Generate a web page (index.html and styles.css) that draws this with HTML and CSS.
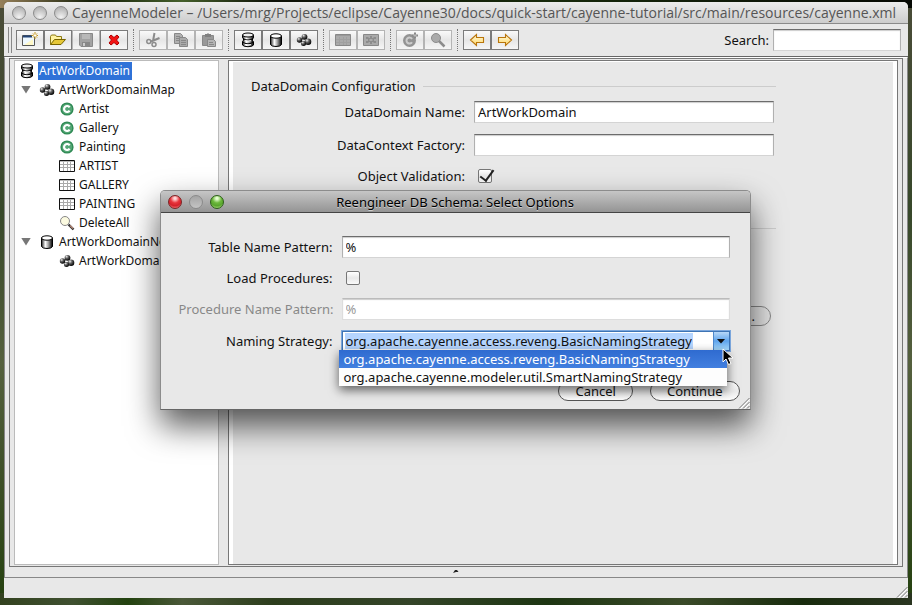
FILE: index.html
```html
<!DOCTYPE html>
<html lang="en">
<head>
<meta charset="utf-8">
<title>CayenneModeler</title>
<link rel="stylesheet" href="styles.css">
</head>
<body>
<svg class="defs" aria-hidden="true">
  <defs>
    <linearGradient id="metal"><stop offset="0" stop-color="#222"/><stop offset=".35" stop-color="#fff"/><stop offset=".6" stop-color="#aaa"/><stop offset="1" stop-color="#000"/></linearGradient>
    <radialGradient id="ball" cx=".35" cy=".3" r=".7"><stop offset="0" stop-color="#eee"/><stop offset=".4" stop-color="#666"/><stop offset="1" stop-color="#000"/></radialGradient>
    <linearGradient id="gold" x2="0" y2="1"><stop offset="0" stop-color="#fffbe0"/><stop offset="1" stop-color="#ffd868"/></linearGradient>
  </defs>
  <symbol id="i-domain" viewBox="0 0 16 16">
    <path d="M2.500 3v2.500q0 .8 1 1v2q-1 .3-1 1v3.500q1 1.700 5.500 1.700t5.500-1.700v-3q0-.8-1-1.200v-2q1-.4 1-1V3z" fill="url(#metal)" stroke="#000"/>
    <ellipse cx="8" cy="3" rx="5.500" ry="2" fill="#eee" stroke="#000"/>
    <path d="M3 6.500q1.500 1.500 5 1.500t5-1.500M3 10q1.500 1.800 5 1.800t5-1.800" fill="none" stroke="#000"/>
    <path d="M5 8.700q3 .8 6 0M5 12.600q3 .8 6 0" fill="none" stroke="#fff"/>
  </symbol>
  <symbol id="i-node" viewBox="0 0 16 16">
    <path d="M2.500 4v8.500q1 2 5.500 2t5.500-2V4z" fill="url(#metal)" stroke="#000"/>
    <ellipse cx="8" cy="4" rx="5.500" ry="2.200" fill="#fff" stroke="#000"/>
  </symbol>
  <symbol id="i-map" viewBox="0 0 16 16">
    <path d="M4 9l5-4M9 5l3 6M4 9l8 2" stroke="#555" fill="none"/>
    <circle cx="3.500" cy="8" r="2.700" fill="url(#ball)"/><circle cx="8.500" cy="4.800" r="2.900" fill="url(#ball)"/>
    <circle cx="12" cy="9.800" r="3.300" fill="url(#ball)"/><circle cx="7.500" cy="11.500" r="2.500" fill="url(#ball)"/>
  </symbol>
  <symbol id="i-class" viewBox="0 0 16 16">
    <circle cx="8" cy="8" r="6.600" fill="#2f8a54"/>
    <circle cx="8" cy="8" r="5.200" fill="#55a676"/>
    <path d="M10.600 6.400A3 3 0 1 0 10.600 9.600" fill="none" stroke="#fff" stroke-width="2.200"/>
  </symbol>
  <symbol id="i-table" viewBox="0 0 16 14">
    <path d="M.5 1.500h15v11H.5z" fill="#fff" stroke="#111"/>
    <path d="M1 2.500h14" stroke="#bbb"/>
    <path d="M1 5.500h14M1 8.500h14M4.500 3v9M8.500 3v9M11.500 3v9" stroke="#aaa"/>
  </symbol>
  <symbol id="i-query" viewBox="0 0 16 16">
    <path d="M9.500 9.500l5 5" stroke="#333" stroke-width="2.400"/><path d="M11 10.500l3 3" stroke="#b98876" stroke-width="1.200"/>
    <circle cx="6" cy="6" r="4.500" fill="#fbfae0" stroke="#888"/>
  </symbol>
  <symbol id="i-left" viewBox="0 0 16 16">
    <path d="M1.500 8L7.500 2.500V5.500H14.500V10.500H7.500V13.500Z" fill="url(#gold)" stroke="#b9760c" stroke-width="1.100"/>
  </symbol>
  <symbol id="i-grip" viewBox="0 0 12 12">
    <path d="M1 11.500L11.500 1M5 11.500L11.500 5M9 11.500L11.500 9" stroke="#777"/><path d="M2.500 11.500L11.500 2.500M6.500 11.500L11.500 6.500" stroke="#fff"/>
  </symbol>
</svg>

<main class="window">
  <header class="titlebar">
    <span class="lights"><i></i><i></i><i></i></span>
    <h1>CayenneModeler – /Users/mrg/Projects/eclipse/Cayenne30/docs/quick-start/cayenne-tutorial/src/main/resources/cayenne.xml</h1>
  </header>

  <div class="toolbar">
    <span class="handle"></span>
    <div class="group">
      <button type="button" aria-label="New project"><svg viewBox="0 0 16 16"><path d="M.5 3.500h12v10H.5z" fill="#eef8ff" stroke="#555"/><path d="M1 4.500h9" stroke="#247" stroke-width="2"/><path d="M2 13L11 7v6z" fill="#fff8c8"/><path d="M13 0v7M9.500 3.500h6.500M11 1.500l4 4M15 1.500l-4 4" stroke="#c89818"/><path d="M13 2v3M11.500 3.500h3" stroke="#fff"/></svg></button>
      <button type="button" aria-label="Open project"><svg viewBox="0 0 16 16"><path d="M.5 12.500v-8l1-1.500h4l1 1.500h5v3" fill="#fff3a0" stroke="#8d7b12"/><path d="M.5 12.500L4.500 7.500h11L11 12.500z" fill="#e6c838" stroke="#776400"/></svg></button>
      <button type="button" aria-label="Save" disabled><svg viewBox="0 0 16 16"><path d="M1.500 1.500h13v13H3l-1.500-1.500z" fill="#a2a2a2" stroke="#888"/><path d="M4 2h8v5H4z" fill="#b8b8b8"/><path d="M4 10h8v4H4z" fill="#888"/><path d="M5 11h2v3H5z" fill="#ccc"/></svg></button>
      <button type="button" aria-label="Remove"><svg viewBox="0 0 16 16"><path d="M3 5l2-2 3 2.500L11 3l2 2-2.500 3 2.500 3-2 2-3-2.500L5 13l-2-2 2.500-3z" fill="#f31313" stroke="#b00000"/></svg></button>
    </div>
    <span class="sep"></span>
    <div class="group">
      <button type="button" aria-label="Cut" disabled><svg viewBox="0 0 16 16"><path d="M9.500 1L8 9M14.500 6L6 9.500" stroke="#8c8c8c" stroke-width="2"/><circle cx="3.800" cy="9.500" r="2" fill="none" stroke="#8c8c8c" stroke-width="1.500"/><circle cx="9" cy="12.500" r="2" fill="none" stroke="#8c8c8c" stroke-width="1.500"/></svg></button>
      <button type="button" aria-label="Copy" disabled><svg viewBox="0 0 16 16"><path d="M1.500 1.500h6l2 2v8h-8z" fill="#b0b0b0" stroke="#888"/><path d="M6.500 5.500h6l2 2v7h-8z" fill="#aaa" stroke="#888"/><path d="M3 4.500h4M3 6.500h3M3 8.500h3M8 8.500h5M8 10.500h5M8 12.500h5" stroke="#888"/></svg></button>
      <button type="button" aria-label="Paste" disabled><svg viewBox="0 0 16 16"><path d="M1.500 3.500h11v10h-11z" fill="#999" stroke="#888"/><path d="M4 2h2l1-1 1 1h2v3H4z" fill="#808080"/><path d="M6.500 7.500h6l2 2v5h-8z" fill="#b4b4b4" stroke="#888"/><path d="M8 10.500h4M8 12.500h5" stroke="#888"/></svg></button>
    </div>
    <span class="sep"></span>
    <div class="group">
      <button type="button" aria-label="New domain"><svg><use href="#i-domain"/></svg></button>
      <button type="button" aria-label="New node"><svg><use href="#i-node"/></svg></button>
      <button type="button" aria-label="New map"><svg><use href="#i-map"/></svg></button>
    </div>
    <span class="sep"></span>
    <div class="group">
      <button type="button" aria-label="New table" disabled><svg viewBox="0 0 16 16"><path d="M.5 2.500h15v11H.5z" fill="#aaa" stroke="#888"/><path d="M1 3.500h14" stroke="#999"/><path d="M1 7.500h14M1 10.500h14M4.500 5v8M8.500 5v8M11.500 5v8" stroke="#a0a0a0"/></svg></button>
      <button type="button" aria-label="New procedure" disabled><svg viewBox="0 0 16 16"><path d="M.5 2.500h15v11H.5z" fill="#aaa" stroke="#888"/><path d="M3 5h2l1 1h1V4h2v2h1l1-1h2v2h-2v2h2v2h-2l-1-1H9v2H7v-2H6l-1 1H3V9h2V7H3z" fill="#8c8c8c"/><path d="M6.500 7.500h3v1h-3z" fill="#ccc"/></svg></button>
    </div>
    <span class="sep"></span>
    <div class="group">
      <button type="button" aria-label="New class" disabled><svg viewBox="0 0 16 16"><circle cx="7.500" cy="8.500" r="6.500" fill="#939393"/><path d="M10 7A3 3 0 1 0 10 10.200" fill="none" stroke="#ccc" stroke-width="2"/><path d="M13 .5v6M10 3.500h6" stroke="#888" stroke-width="2"/><path d="M13 2v3M11.500 3.500h3" stroke="#bbb"/></svg></button>
      <button type="button" aria-label="New query" disabled><svg viewBox="0 0 16 16"><path d="M9 9l5.500 5.500" stroke="#8c8c8c" stroke-width="2.500"/><circle cx="6" cy="6" r="4.500" fill="#aaa" stroke="#8c8c8c"/></svg></button>
    </div>
    <span class="sep"></span>
    <div class="group">
      <button type="button" aria-label="Back"><svg><use href="#i-left"/></svg></button>
      <button type="button" aria-label="Forward"><svg class="flip"><use href="#i-left"/></svg></button>
    </div>
    <label class="search">Search: <input type="text"></label>
  </div>

  <div class="workspace">
    <div class="split">
      <nav class="tree" aria-label="Project">
        <ul>
          <li><a class="node selected" href="#domain"><svg><use href="#i-domain"/></svg><span>ArtWorkDomain</span></a>
            <ul>
              <li><div class="branch"><button type="button" class="toggle" aria-label="Collapse"></button><a class="node" href="#map"><svg><use href="#i-map"/></svg><span>ArtWorkDomainMap</span></a></div>
                <ul class="leaves">
                  <li><a class="node" href="#n1"><svg><use href="#i-class"/></svg><span>Artist</span></a></li>
                  <li><a class="node" href="#n2"><svg><use href="#i-class"/></svg><span>Gallery</span></a></li>
                  <li><a class="node" href="#n3"><svg><use href="#i-class"/></svg><span>Painting</span></a></li>
                  <li><a class="node" href="#n4"><svg><use href="#i-table"/></svg><span>ARTIST</span></a></li>
                  <li><a class="node" href="#n5"><svg><use href="#i-table"/></svg><span>GALLERY</span></a></li>
                  <li><a class="node" href="#n6"><svg><use href="#i-table"/></svg><span>PAINTING</span></a></li>
                  <li><a class="node" href="#n7"><svg><use href="#i-query"/></svg><span>DeleteAll</span></a></li>
                </ul>
              </li>
              <li><div class="branch"><button type="button" class="toggle" aria-label="Collapse"></button><a class="node" href="#node"><svg><use href="#i-node"/></svg><span>ArtWorkDomainNode</span></a></div>
                <ul class="leaves">
                  <li><a class="node" href="#n8"><svg><use href="#i-map"/></svg><span>ArtWorkDomainMap</span></a></li>
                </ul>
              </li>
            </ul>
          </li>
        </ul>
      </nav>
      <section class="editor">
        <form class="config">
          <h2>DataDomain Configuration</h2>
          <div class="fields">
            <label for="dname">DataDomain Name:</label><input id="dname" type="text" value="ArtWorkDomain">
            <label for="factory">DataContext Factory:</label><input id="factory" type="text">
            <label for="valid">Object Validation:</label><input id="valid" type="checkbox" checked>
          </div>
          <hr>
          <button type="button" class="pill remote">...</button>
        </form>
      </section>
    </div>
    <div class="console"><svg viewBox="0 0 6 4"><path d="M0 3L2 0h2l1.500 2L3 2z" fill="#222"/></svg></div>
  </div>
  <footer class="status"><svg class="grip"><use href="#i-grip"/></svg></footer>
</main>

<div class="dialog" role="dialog" aria-labelledby="dtitle">
  <header class="dialog-title">
    <span class="lights"><i class="red"></i><i class="gray"></i><i class="green"></i></span>
    <h2 id="dtitle">Reengineer DB Schema: Select Options</h2>
  </header>
  <form class="dialog-body">
    <div class="options">
      <label for="tpat">Table Name Pattern:</label><input id="tpat" type="text" value="%">
      <label for="load">Load Procedures:</label><input id="load" type="checkbox">
      <label for="ppat" class="off">Procedure Name Pattern:</label><input id="ppat" type="text" value="%" disabled>
      <label for="strategy">Naming Strategy:</label>
      <div class="combo">
        <input id="strategy" type="text" value="org.apache.cayenne.access.reveng.BasicNamingStrategy">
        <button type="button" class="drop" aria-label="Show strategies"></button>
        <ul class="popup" role="listbox">
          <li role="option" aria-selected="true">org.apache.cayenne.access.reveng.BasicNamingStrategy</li>
          <li role="option" aria-selected="false">org.apache.cayenne.modeler.util.SmartNamingStrategy</li>
        </ul>
        <svg class="cursor" viewBox="0 0 12 18"><path d="M1 1v13l3-3 2.500 5.500 2.500-1L6.500 10H11z" fill="#000" stroke="#fff"/></svg>
      </div>
    </div>
    <div class="actions">
      <button type="button" class="pill">Cancel</button>
      <button type="button" class="pill">Continue</button>
    </div>
  </form>
  <svg class="grip"><use href="#i-grip"/></svg>
</div>
</body>
</html>
```
FILE: styles.css
```css
* { box-sizing: border-box; }

body {
  margin: 0;
  min-height: 100vh;
  padding: 2px 4px 7px 4px;
  display: flex;
  flex-direction: column;
  overflow: hidden;
  font: 13px/18px "Noto Sans", sans-serif;
  color: #111;
  background:
    linear-gradient(90deg, #33421f, #3f5030 8%, #23420f 14%, #4a5838 20%, #2c3d1c 30%, #344428 45%, #1d3512 60%, #3a4a28 75%, #182b0d 88%, #2a3520) bottom / 100% 12px no-repeat,
    linear-gradient(90deg, #96805a, #16200a 10%, #45602c 20%, #0c0f06 30%, #182a0c 60%, #060904) top / 100% 8px no-repeat,
    linear-gradient(#4a4c38, #37482a 35%, #55603e 60%, #24400f);
}

.defs { position: absolute; width: 0; height: 0; }
ul { list-style: none; margin: 0; padding: 0; }
h1, h2 { margin: 0; font-weight: 400; font-size: 13px; }
input, button { font: inherit; color: inherit; margin: 0; }
svg { display: block; }

.window {
  flex: 1;
  display: flex;
  flex-direction: column;
  border-radius: 5px 5px 0 0;
  background: #e8e8e8;
}

.titlebar {
  display: flex;
  align-items: center;
  height: 22px;
  padding: 0 8px;
  border-bottom: 1px solid #8a8a8a;
  border-radius: 5px 5px 0 0;
  background: linear-gradient(#ececec, #cdcdcd);
}
.titlebar h1 {
  flex: 1;
  font-family: "Open Sans", "Noto Sans", sans-serif;
  font-size: 14px;
  text-align: center;
  white-space: nowrap;
  color: #555;
}

.lights { display: flex; gap: 7px; }
.lights i {
  width: 14px;
  height: 14px;
  border: 1px solid #8b8b8b;
  border-radius: 50%;
  background: radial-gradient(circle at 50% 85%, #f2f2f2, #c4c4c4 60%, #a8a8a8);
}
.lights .red { border-color: #7b2424; background: radial-gradient(circle at 50% 20%, #ffd9d9 8%, #e8343c 40%, #d3202a 65%, #ff9a9a); }
.lights .gray { border-color: #8a8a8a; background: linear-gradient(#a4a4a4, #c4c4c4); }
.lights .green { border-color: #2c5e18; background: radial-gradient(circle at 50% 20%, #e6ffd2 8%, #6cb83c 40%, #58a52c 65%, #c8f49a); }

.toolbar {
  display: flex;
  align-items: center;
  height: 33px;
  padding: 0 7px 0 4px;
  border-bottom: 1px solid #666;
}
.handle { width: 4px; height: 26px; margin-right: 4px; border: solid #888; border-width: 0 1px; }
.group { display: flex; }
.group button {
  display: grid;
  place-items: center;
  width: 28px;
  height: 20px;
  padding: 0;
  border: 1px solid #7b7b7b;
  background: linear-gradient(#fafafa, #e6e6e6 50%, #f6f6f6);
}
.group button:disabled { border-color: #b4b4b4; }
.group svg { width: 16px; height: 16px; }
.flip { transform: scaleX(-1); }
.sep { width: 1px; height: 22px; margin: 0 5px; border-left: 1px dotted #777; }
.search { display: flex; align-items: center; gap: 4px; margin-left: auto; }
.search input { width: 128px; }

input[type="text"] {
  min-width: 0;
  height: 22px;
  padding: 0 3px;
  border: 1px solid #b0b0b0;
  border-top-color: #6c6c6c;
  border-bottom-color: #d4d4d4;
  border-radius: 0;
  outline: none;
  background: #fff;
  box-shadow: inset 0 1px 1px #ccc;
}
input[type="text"]:disabled { color: #999; border-color: #ddd; border-top-color: #bbb; }

input[type="checkbox"] {
  appearance: none;
  width: 14px;
  height: 14px;
  margin-left: 4px;
  border: 1px solid #777;
  border-radius: 2px;
  background: linear-gradient(#fff, #e8e8e8 50%, #fafafa);
}
input[type="checkbox"]:checked::after {
  content: "";
  display: block;
  width: 6px;
  height: 12px;
  margin: -3px 0 0 4px;
  border: solid #222;
  border-width: 0 2px 2px 0;
  transform: rotate(36deg);
}

.workspace {
  flex: 1;
  display: flex;
  flex-direction: column;
  border: 1px solid #888;
  border-top-color: #fff;
}
.split {
  flex: 1;
  display: flex;
  gap: 9px;
  margin: 0 4px;
  padding: 1px 4px;
  border: 1px solid #777;
}
.tree {
  flex: 0 0 205px;
  overflow: hidden;
  padding: 0 4px;
  border: 1px solid #bbb;
  background: #fff;
  font-size: 12px;
}
.node {
  display: flex;
  align-items: center;
  gap: 3px;
  height: 19px;
  color: inherit;
  text-decoration: none;
  white-space: nowrap;
}
.node svg { flex: none; width: 16px; height: 16px; }
.node span { padding: 0 2px 0 1px; }
.node.selected span { color: #fff; background: #2f72d8; }
.branch { display: flex; align-items: center; }
.toggle {
  width: 10px;
  height: 8px;
  margin: 0 8px 0 2px;
  padding: 0;
  border: 0;
  background: #777;
  clip-path: polygon(0 0, 100% 0, 50% 100%);
}
.leaves { padding-left: 40px; }

.editor {
  flex: 1;
  min-width: 0;
  border: 1px solid #777;
  box-shadow: inset 4px 1px #fff, inset -4px 0 #fff;
  padding: 15px 22px;
}
.config { max-width: 525px; display: flex; flex-direction: column; }
.config h2 { display: flex; align-items: center; gap: 7px; height: 20px; }
.config h2::after { content: ""; flex: 1; border-top: 1px solid #ccc; }
.fields {
  display: grid;
  grid-template-columns: 214px 1fr;
  gap: 11px 9px;
  padding: 5px 2px 0 0;
  align-items: center;
}
.fields label, .options label { text-align: right; white-space: nowrap; }
.config hr { width: 100%; margin: 43px 0 77px; border: 0; border-top: 1px solid #ccc; }

.pill {
  height: 20px;
  padding: 0 15px;
  border: 1px solid #555;
  border-radius: 10px;
  line-height: 18px;
  background: linear-gradient(#fff, #ececec 50%, #fdfdfd);
}
.remote { align-self: flex-end; width: 200px; margin-right: 5px; text-align: right; border-color: #888; background: #e4e4e4; }

.console { display: grid; place-items: center; height: 10px; }
.console svg { width: 6px; height: 4px; }
.status { display: flex; justify-content: flex-end; align-items: flex-end; height: 20px; }
.grip { width: 12px; height: 12px; }

.dialog {
  position: absolute;
  top: 190px;
  left: 0;
  right: 2px;
  width: 591px;
  max-width: 100%;
  margin: 0 auto;
  border: 1px solid #8c8c8c;
  border-bottom-color: #666;
  border-radius: 5px 5px 0 0;
  background: #e8e8e8;
  box-shadow: 0 16px 32px rgba(0, 0, 0, .65);
}
.dialog-title {
  display: grid;
  grid-template-columns: 1fr auto 1fr;
  align-items: center;
  height: 22px;
  padding: 0 7px;
  border-bottom: 1px solid #444;
  border-radius: 4px 4px 0 0;
  background: linear-gradient(#c6c6c6, #949494);
}
.dialog-title h2 { text-shadow: 0 1px #ccc; color: #000; }
.dialog-body { padding: 23px 20px 8px 18px; }
.options {
  display: grid;
  grid-template-columns: 154px 1fr;
  gap: 11px 9px;
  align-items: center;
}
.off { color: #888; }

.combo {
  position: relative;
  display: flex;
  height: 20px;
  padding: 1px 0 1px 2px;
  border: 1px solid #3e74b4;
  background: #fff;
  box-shadow: 0 0 0 1px #7ba6dc;
}
.combo input[type="text"] {
  height: 16px;
  field-sizing: content;
  padding: 0 1px;
  border: 0;
  background: #b5d5ff;
  box-shadow: none;
}
.drop {
  width: 16px;
  margin: -1px 0 -1px auto;
  padding: 5px 3px;
  border: 0;
  border-left: 1px solid #4d88cc;
  background: linear-gradient(#b8d8f8, #5fa4ec 50%, #a8dcff);
}
.drop::after {
  content: "";
  display: block;
  height: 5px;
  background: #111;
  clip-path: polygon(0 0, 100% 0, 50% 100%);
}
.popup {
  position: absolute;
  top: 18px;
  left: -4px;
  right: 2px;
  background: #fdfdfd;
  box-shadow: 0 4px 10px rgba(0, 0, 0, .6);
}
.popup li { height: 18px; padding: 0 5px; white-space: nowrap; }
.popup li[aria-selected="true"] { color: #fff; background: linear-gradient(#2f6bd0, #427fdf); }
.cursor { position: absolute; top: 16px; right: -5px; width: 12px; height: 18px; }

.actions { display: flex; justify-content: flex-end; gap: 17px; margin: 30px -10px 0 0; }
.actions .pill { padding: 0 16px; }
.dialog > .grip { position: absolute; right: 0; bottom: 0; }
```
